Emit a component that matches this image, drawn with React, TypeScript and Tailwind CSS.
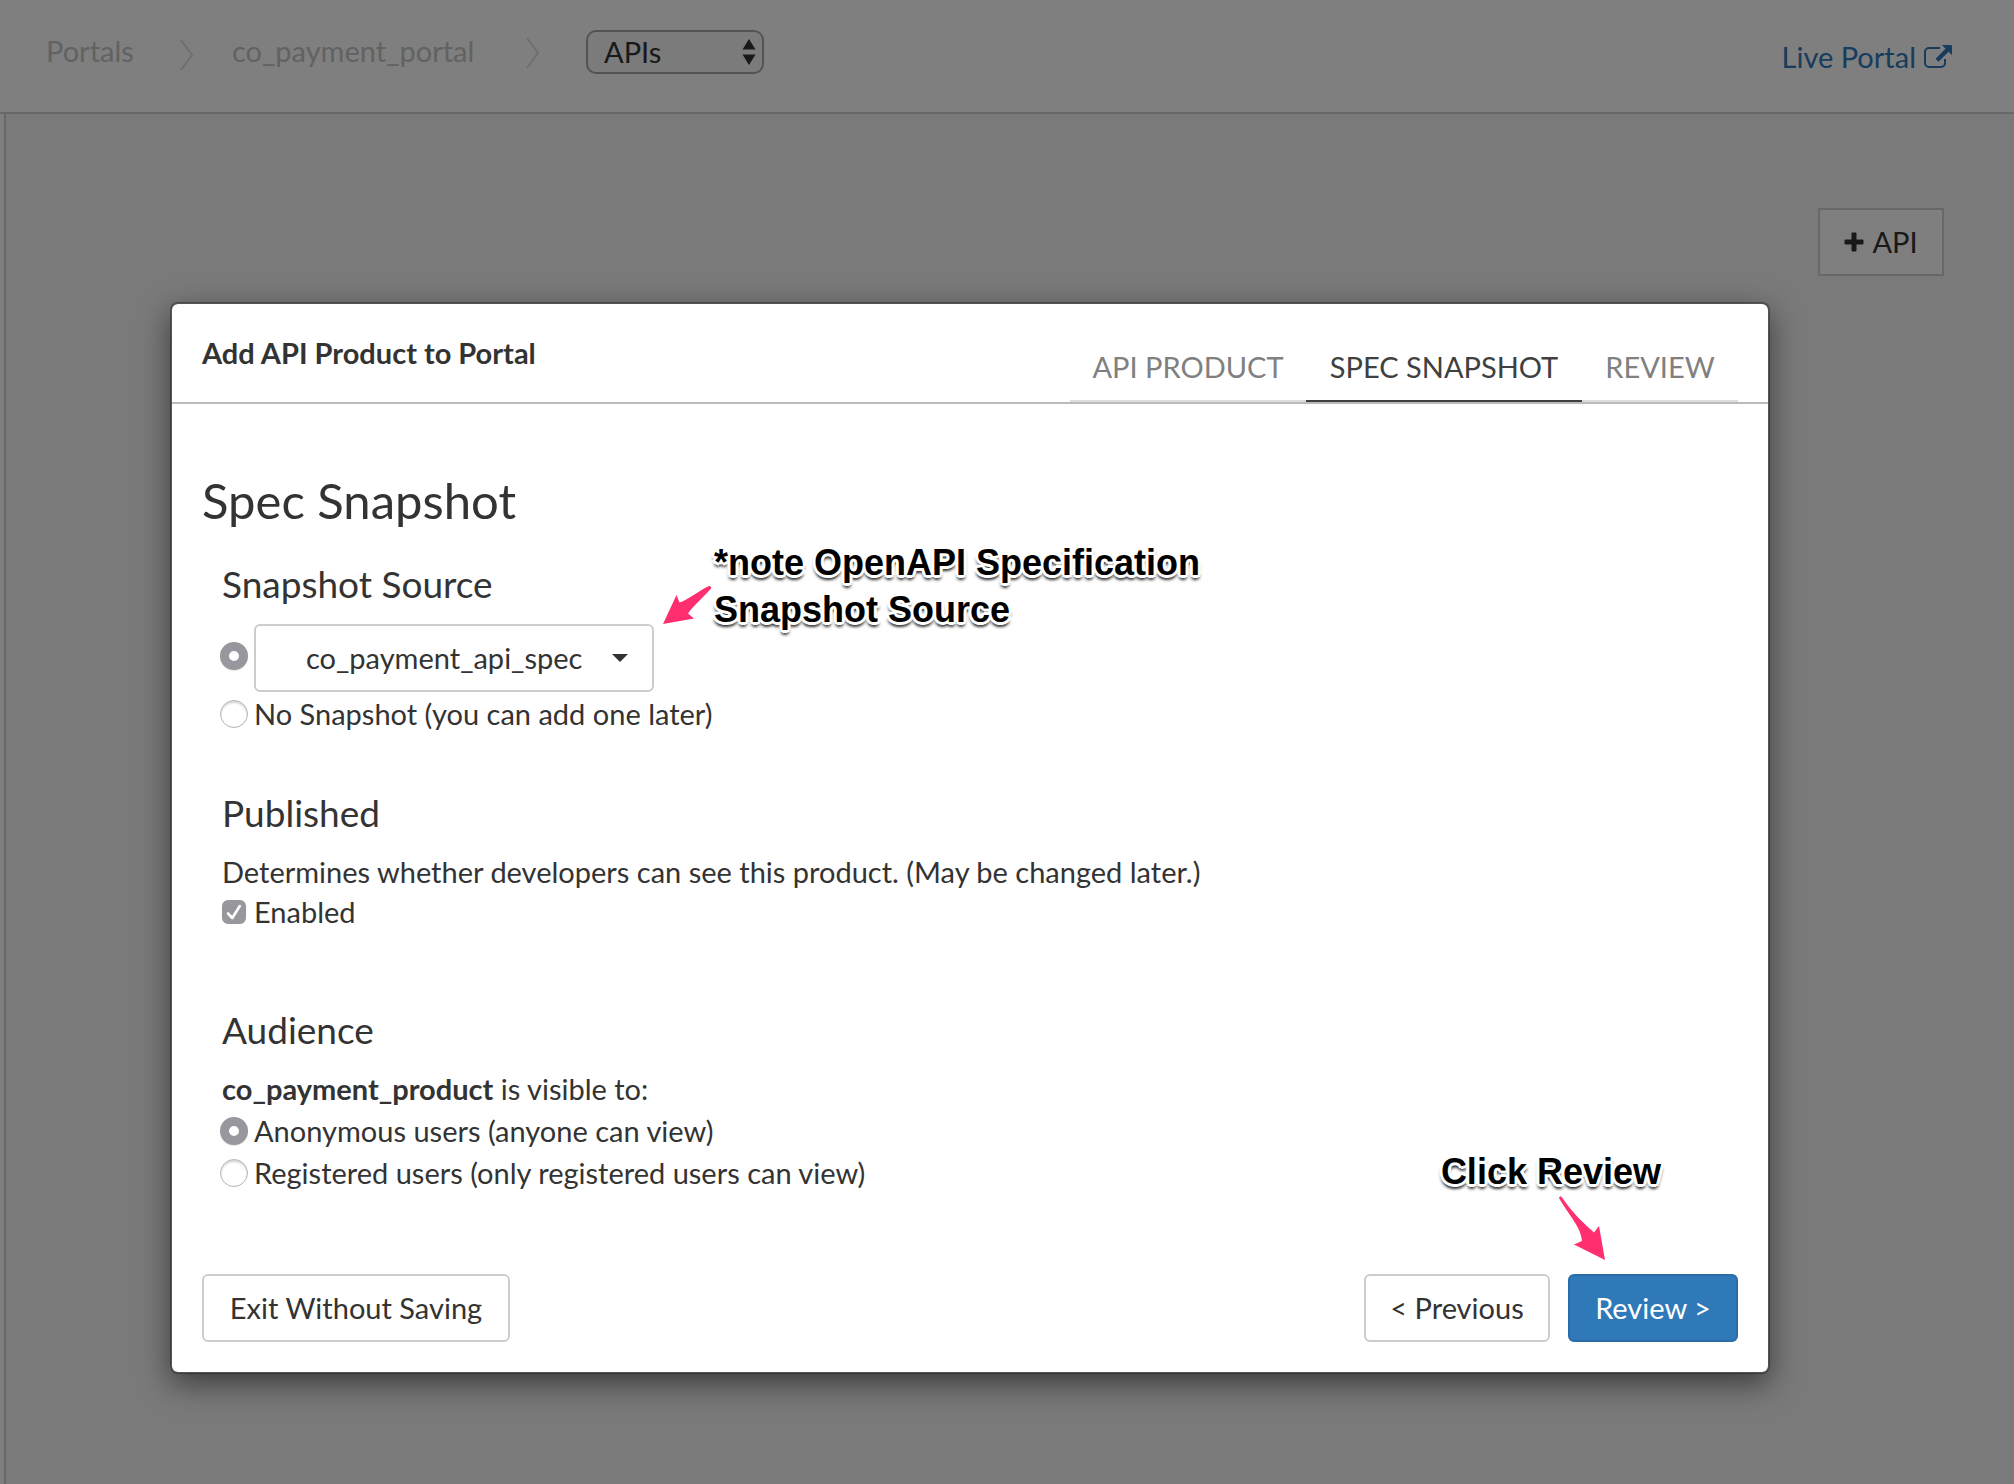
import { useState } from "react";
import type { ReactNode } from "react";

const HALO =
  "[text-shadow:3px_0_0_#fff,-3px_0_0_#fff,0_3px_0_#fff,0_-3px_0_#fff,2px_2px_0_#fff,-2px_2px_0_#fff,2px_-2px_0_#fff,-2px_-2px_0_#fff,0_5px_3px_rgba(0,0,0,0.6),2px_4px_3px_rgba(0,0,0,0.4),-2px_4px_3px_rgba(0,0,0,0.4)]";

function Crumb() {
  return (
    <svg viewBox="0 0 14 32" className="h-8 w-3.5 shrink-0" fill="none" stroke="#dcdcdc" strokeWidth="2" aria-hidden="true">
      <path d="M1 1 L12 16 L1 31" />
    </svg>
  );
}

function TopBar() {
  return (
    <header className="flex h-[114px] items-start justify-between border-b-2 border-[#d0d0d0] bg-white pr-[62px] pl-[46px]">
      <nav aria-label="Breadcrumb" className="flex h-[102px] items-center">
        <a href="#portals" className="min-w-[92px] text-[#c4c4c4]">Portals</a>
        <span className="mr-[38px] ml-[42px] pt-2"><Crumb /></span>
        <a href="#portal" className="min-w-[252px] text-[#c4c4c4]">co_payment_portal</a>
        <span className="mr-[46px] ml-[42px] pt-1"><Crumb /></span>
        <span className="relative flex pt-0.5">
          <select
            aria-label="Section"
            defaultValue="APIs"
            className="h-11 w-[178px] appearance-none rounded-[10px] border-2 border-[#a6a6a6] bg-[#f6f6f6] pl-4 text-[29px] leading-9 text-[#333]"
          >
            <option>APIs</option>
            <option>Pages</option>
          </select>
          <svg viewBox="0 0 14 26" className="pointer-events-none absolute top-[11px] right-2 h-[26px] w-3.5" fill="#333" aria-hidden="true">
            <path d="M7 0 L13.5 10.5 H.5 Z M7 26 L.5 15.5 H13.5 Z" />
          </svg>
        </span>
      </nav>
      <a href="#live" className="mt-[39px] flex items-center gap-2 text-[#2f79b9]">
        Live Portal
        <svg viewBox="0 0 28 26" className="h-[26px] w-7" aria-hidden="true">
          <path d="M16 4 H5 a4 4 0 0 0 -4 4 V19 a4 4 0 0 0 4 4 H17 a4 4 0 0 0 4 -4 V15" fill="none" stroke="currentColor" strokeWidth="2" />
          <path d="M18 1 H27 a1 1 0 0 1 1 1 V11 L24.5 7.8 L14.5 17.8 L11.5 14.8 L21.5 4.8 Z" fill="currentColor" />
        </svg>
      </a>
    </header>
  );
}

function Radio({ name, checked, onPick, label }: { name: string; checked: boolean; onPick: () => void; label?: string }) {
  return (
    <input
      type="radio"
      name={name}
      aria-label={label}
      checked={checked}
      onChange={onPick}
      className="size-7 shrink-0 appearance-none rounded-full border border-[#b4b4b4] bg-white shadow-[inset_0_2px_2px_rgba(0,0,0,0.16)] checked:border-[9px] checked:border-[#98979d] checked:shadow-[0_1px_1px_rgba(0,0,0,0.1)]"
    />
  );
}

function Choice({ name, label, checked, onPick }: { name: string; label: string; checked: boolean; onPick: () => void }) {
  return (
    <label className="flex h-[42px] items-center gap-1.5">
      <Radio name={name} checked={checked} onPick={onPick} />
      {label}
    </label>
  );
}

function Heading({ children }: { children: ReactNode }) {
  return <h3 className="text-[37px] leading-[44px]">{children}</h3>;
}

const TABS = ["API PRODUCT", "SPEC SNAPSHOT", "REVIEW"];

const OUTLINE = "h-[68px] rounded-md border-2 border-[#ccc] bg-white";

function Dialog() {
  const [source, setSource] = useState("spec");
  const [audience, setAudience] = useState("anonymous");
  const [enabled, setEnabled] = useState(true);

  return (
    <section
      role="dialog"
      aria-modal="true"
      aria-labelledby="dialog-title"
      className="relative mt-[302px] mr-[244px] ml-[170px] rounded-lg border-2 border-black/30 bg-white bg-clip-padding shadow-[0_10px_30px_rgba(0,0,0,0.5)]"
    >
      <div className="flex h-[100px] items-end justify-between border-b-2 border-[#bbb] px-[30px]">
        <h2 id="dialog-title" className="mb-[31px] font-bold">Add API Product to Portal</h2>
        <div role="tablist" className="grid grid-cols-[236px_276px_156px]">
          {TABS.map((tab) => (
            <button
              key={tab}
              type="button"
              role="tab"
              aria-selected={tab === "SPEC SNAPSHOT"}
              className="border-b-2 border-[#ddd] pb-[15px] text-[#808080] aria-selected:border-[#404040] aria-selected:text-[#404040]"
            >
              {tab}
            </button>
          ))}
        </div>
      </div>

      <div className="px-[30px] pt-[66px] pb-[30px]">
        <h1 className="text-[49px] leading-[60px]">Spec Snapshot</h1>
        <div className="flex flex-col pt-8 pl-[18px]">
          <div className="pl-0.5"><Heading>Snapshot Source</Heading></div>
          <div className="mt-[18px] mb-px flex items-center gap-1.5">
            <span className="flex pb-1"><Radio name="source" label="Use co_payment_api_spec" checked={source === "spec"} onPick={() => setSource("spec")} /></span>
            <button type="button" aria-haspopup="listbox" className={`${OUTLINE} flex w-[400px] items-center justify-between pr-6 pl-[50px]`}>
              co_payment_api_spec
              <svg viewBox="0 0 16 8" className="h-2 w-4" fill="#333" aria-hidden="true"><path d="M0 0 H16 L8 8 Z" /></svg>
            </button>
          </div>
          <Choice name="source" label="No Snapshot (you can add one later)" checked={source === "none"} onPick={() => setSource("none")} />

          <div className="mt-14 pl-0.5">
            <Heading>Published</Heading>
            <p className="mt-[19px]">Determines whether developers can see this product. (May be changed later.)</p>
            <label className="mt-1 flex items-center gap-2">
              <span className="relative flex">
                <input
                  type="checkbox"
                  checked={enabled}
                  onChange={(e) => setEnabled(e.target.checked)}
                  className="peer size-6 appearance-none rounded-md border-2 border-[#b4b4b4] bg-white checked:border-[#98979d] checked:bg-[#98979d]"
                />
                <svg viewBox="0 0 24 24" className="pointer-events-none absolute inset-0 hidden size-6 peer-checked:block" fill="none" stroke="#fff" strokeWidth="2.6" strokeLinecap="round" strokeLinejoin="round" aria-hidden="true">
                  <path d="M6 13.5 L10.3 18 L17.8 6" />
                </svg>
              </span>
              Enabled
            </label>
          </div>

          <div className="mt-[78px] pl-0.5">
            <Heading>Audience</Heading>
            <p className="mt-[19px]"><b>co_payment_product</b> is visible to:</p>
          </div>
          <div className="pt-[3px]">
            <Choice name="audience" label="Anonymous users (anyone can view)" checked={audience === "anonymous"} onPick={() => setAudience("anonymous")} />
            <Choice name="audience" label="Registered users (only registered users can view)" checked={audience === "registered"} onPick={() => setAudience("registered")} />
          </div>
        </div>

        <div className="mt-20 flex gap-[18px]">
          <button type="button" className={`${OUTLINE} mr-auto min-w-[308px] px-6`}>Exit Without Saving</button>
          <button type="button" className={`${OUTLINE} min-w-[186px] px-6`}>&lt; Previous</button>
          <button type="button" className="h-[68px] min-w-[170px] rounded-md border-2 border-[#2a6da8] bg-[#2f79b9] px-6 text-white">Review &gt;</button>
        </div>
      </div>

      <div className={`pointer-events-none absolute top-[235px] left-[542px] font-['Liberation_Sans',sans-serif] text-[36px] leading-[47px] font-bold text-black ${HALO}`}>
        *note OpenAPI Specification<br />Snapshot Source
      </div>
      <svg viewBox="0 0 50 40" className="pointer-events-none absolute top-[281px] left-[490px] h-10 w-[50px]" fill="#ff2e6e" aria-hidden="true">
        <path d="M1 39 L14.5 10 L17.5 17.5 C27 14.500 36 6 47 1 Q50 1 49 3.500 C41 13 31 21 26 28.500 L32 33.500 Z" />
      </svg>
      <div className={`pointer-events-none absolute right-[107px] bottom-[177px] font-['Liberation_Sans',sans-serif] text-[36px] leading-[47px] font-bold text-black ${HALO}`}>
        Click Review
      </div>
      <svg viewBox="0 0 50 66" className="pointer-events-none absolute right-[161px] bottom-[111px] h-[66px] w-[50px]" fill="#ff2e6e" aria-hidden="true">
        <path d="M2 3 Q3 0 5 2.500 C15 17 26 28 37 37.500 L42 31 L48 65 L17 49.500 L25 46 C24 32 13 22 2 3 Z" />
      </svg>
    </section>
  );
}

export default function App() {
  return (
    <div className="relative flex min-h-screen flex-col bg-white font-[Lato,sans-serif] text-[29px] leading-9 text-[#333]">
      <TopBar />
      <main className="ml-1 flex flex-1 items-start justify-end border-l-2 border-[#d0d0d0] bg-[#f5f5f5] pt-[94px] pr-[70px]">
        <button type="button" className="flex h-[68px] w-[126px] items-center justify-center gap-2 border-2 border-[#d0d0d0] bg-white">
          <svg viewBox="0 0 20 20" className="size-5" fill="#333" aria-hidden="true">
            <path d="M8.500 0.500 h3 a1 1 0 0 1 1 1 V7.500 H18.500 a1 1 0 0 1 1 1 v3 a1 1 0 0 1 -1 1 H12.500 V18.500 a1 1 0 0 1 -1 1 h-3 a1 1 0 0 1 -1 -1 V12.500 H1.500 a1 1 0 0 1 -1 -1 v-3 a1 1 0 0 1 1 -1 H7.500 V1.500 a1 1 0 0 1 1 -1 Z" />
          </svg>
          API
        </button>
      </main>
      <div className="absolute inset-0 bg-black/50">
        <Dialog />
      </div>
    </div>
  );
}
